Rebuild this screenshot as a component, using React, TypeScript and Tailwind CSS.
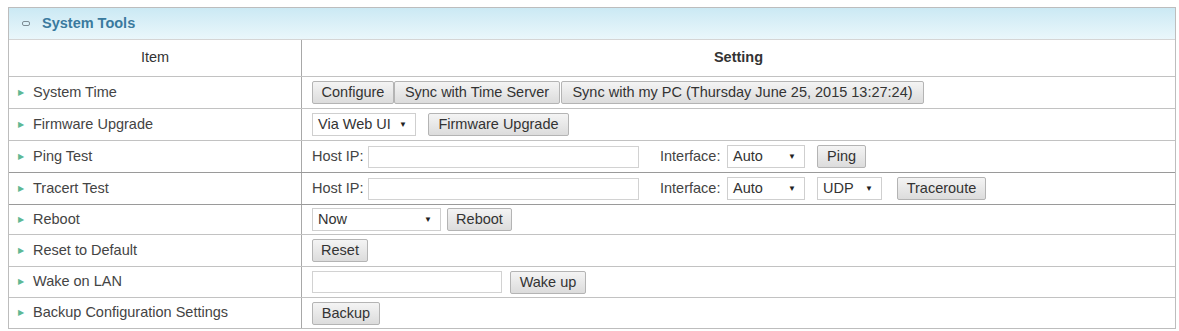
import React from 'react'

const FONT = { fontFamily: '"Liberation Sans", Arial, sans-serif' }

function Btn({ children, w }: { children: React.ReactNode; w: string }) {
  return (
    <button
      className={`h-[23px] ${w} shrink-0 border border-[#b4b4b4] bg-gradient-to-b from-[#f4f4f4] to-[#dcdcdc] text-[14.5px] leading-none text-[#333] rounded-[2px]`}
    >
      {children}
    </button>
  )
}

function Select({ value, w }: { value: string; w: string }) {
  return (
    <div
      className={`h-[23px] ${w} shrink-0 flex items-center justify-between border border-[#cfcfcf] bg-white pl-[5px] pr-[8px] text-[14.5px] text-[#333]`}
    >
      <span>{value}</span>
      <span className="text-[8px] text-[#222]">▼</span>
    </div>
  )
}

function Input({ w }: { w: string }) {
  return <div className={`h-[22px] ${w} shrink-0 border border-[#d2d2d2] bg-white`} />
}

const ROWS: { label: string; h: string; dark?: boolean; setting: React.ReactNode }[] = [
  {
    label: 'System Time',
    h: 'h-[32px]',
    setting: (
      <div className="flex items-center">
        <Btn w="w-[82px]">Configure</Btn>
        <Btn w="w-[166px]">Sync with Time Server</Btn>
        <Btn w="w-[363px] ml-[1px]">Sync with my PC (Thursday June 25, 2015 13:27:24)</Btn>
      </div>
    ),
  },
  {
    label: 'Firmware Upgrade',
    h: 'h-[32px]',
    setting: (
      <div className="flex items-center gap-[12px]">
        <Select value="Via Web UI" w="w-[104px]" />
        <Btn w="w-[141px]">Firmware Upgrade</Btn>
      </div>
    ),
  },
  {
    label: 'Ping Test',
    h: 'h-[32px]',
    setting: (
      <div className="flex items-center text-[14.5px] text-[#444]">
        <span className="w-[56px]">Host IP:</span>
        <Input w="w-[271px]" />
        <span className="ml-[21px] w-[67px]">Interface:</span>
        <Select value="Auto" w="w-[78px]" />
        <div className="ml-[12px]">
          <Btn w="w-[49px]">Ping</Btn>
        </div>
      </div>
    ),
  },
  {
    label: 'Tracert Test',
    h: 'h-[32px]',
    dark: true,
    setting: (
      <div className="flex items-center text-[14.5px] text-[#444]">
        <span className="w-[56px]">Host IP:</span>
        <Input w="w-[271px]" />
        <span className="ml-[21px] w-[67px]">Interface:</span>
        <Select value="Auto" w="w-[78px]" />
        <div className="ml-[12px]">
          <Select value="UDP" w="w-[65px]" />
        </div>
        <div className="ml-[15px]">
          <Btn w="w-[89px]">Traceroute</Btn>
        </div>
      </div>
    ),
  },
  {
    label: 'Reboot',
    h: 'h-[30px]',
    dark: true,
    setting: (
      <div className="flex items-center gap-[6px]">
        <Select value="Now" w="w-[129px]" />
        <Btn w="w-[65px]">Reboot</Btn>
      </div>
    ),
  },
  {
    label: 'Reset to Default',
    h: 'h-[32px]',
    setting: <Btn w="w-[56px]">Reset</Btn>,
  },
  {
    label: 'Wake on LAN',
    h: 'h-[31px]',
    setting: (
      <div className="flex items-center gap-[8px]">
        <Input w="w-[190px]" />
        <Btn w="w-[76px]">Wake up</Btn>
      </div>
    ),
  },
  {
    label: 'Backup Configuration Settings',
    h: 'h-[31px]',
    setting: <Btn w="w-[68px]">Backup</Btn>,
  },
]

export default function App() {
  return (
    <div className="w-[1179px] h-[331px] bg-white pt-[7px] pl-[8px]" style={FONT}>
      <div className="w-[1168px] border border-[#bdbdbd]">
        {/* title band */}
        <div className="h-[31px] flex items-center bg-gradient-to-b from-[#cbe9f4] to-[#eaf7fb] pl-[13px]">
          <span className="w-[8px] h-[5px] rounded-[2px] border border-[#7d8c94] mr-[12px]" />
          <span className="text-[14.5px] font-bold text-[#3a7a9e]">System Tools</span>
        </div>

        {/* column header */}
        <div className="h-[37px] flex border-t border-[#d5d5d5] text-[14.5px] text-[#333]">
          <div className="w-[293px] flex items-center justify-center border-r border-[#a8a8a8]">Item</div>
          <div className="flex-1 flex items-center justify-center font-bold">Setting</div>
        </div>

        {ROWS.map((r) => (
          <div
            key={r.label}
            className={`${r.h} flex border-t ${r.dark ? 'border-[#9a9a9a]' : 'border-[#c2c2c2]'}`}
          >
            <div className="w-[293px] flex items-center border-r border-[#a8a8a8] pl-[9px] text-[14.5px] text-[#444]">
              <span className="text-[8px] text-[#5fb894] mr-[9px]">▶</span>
              {r.label}
            </div>
            <div className="flex-1 flex items-center pl-[10px]">{r.setting}</div>
          </div>
        ))}
      </div>
    </div>
  )
}
